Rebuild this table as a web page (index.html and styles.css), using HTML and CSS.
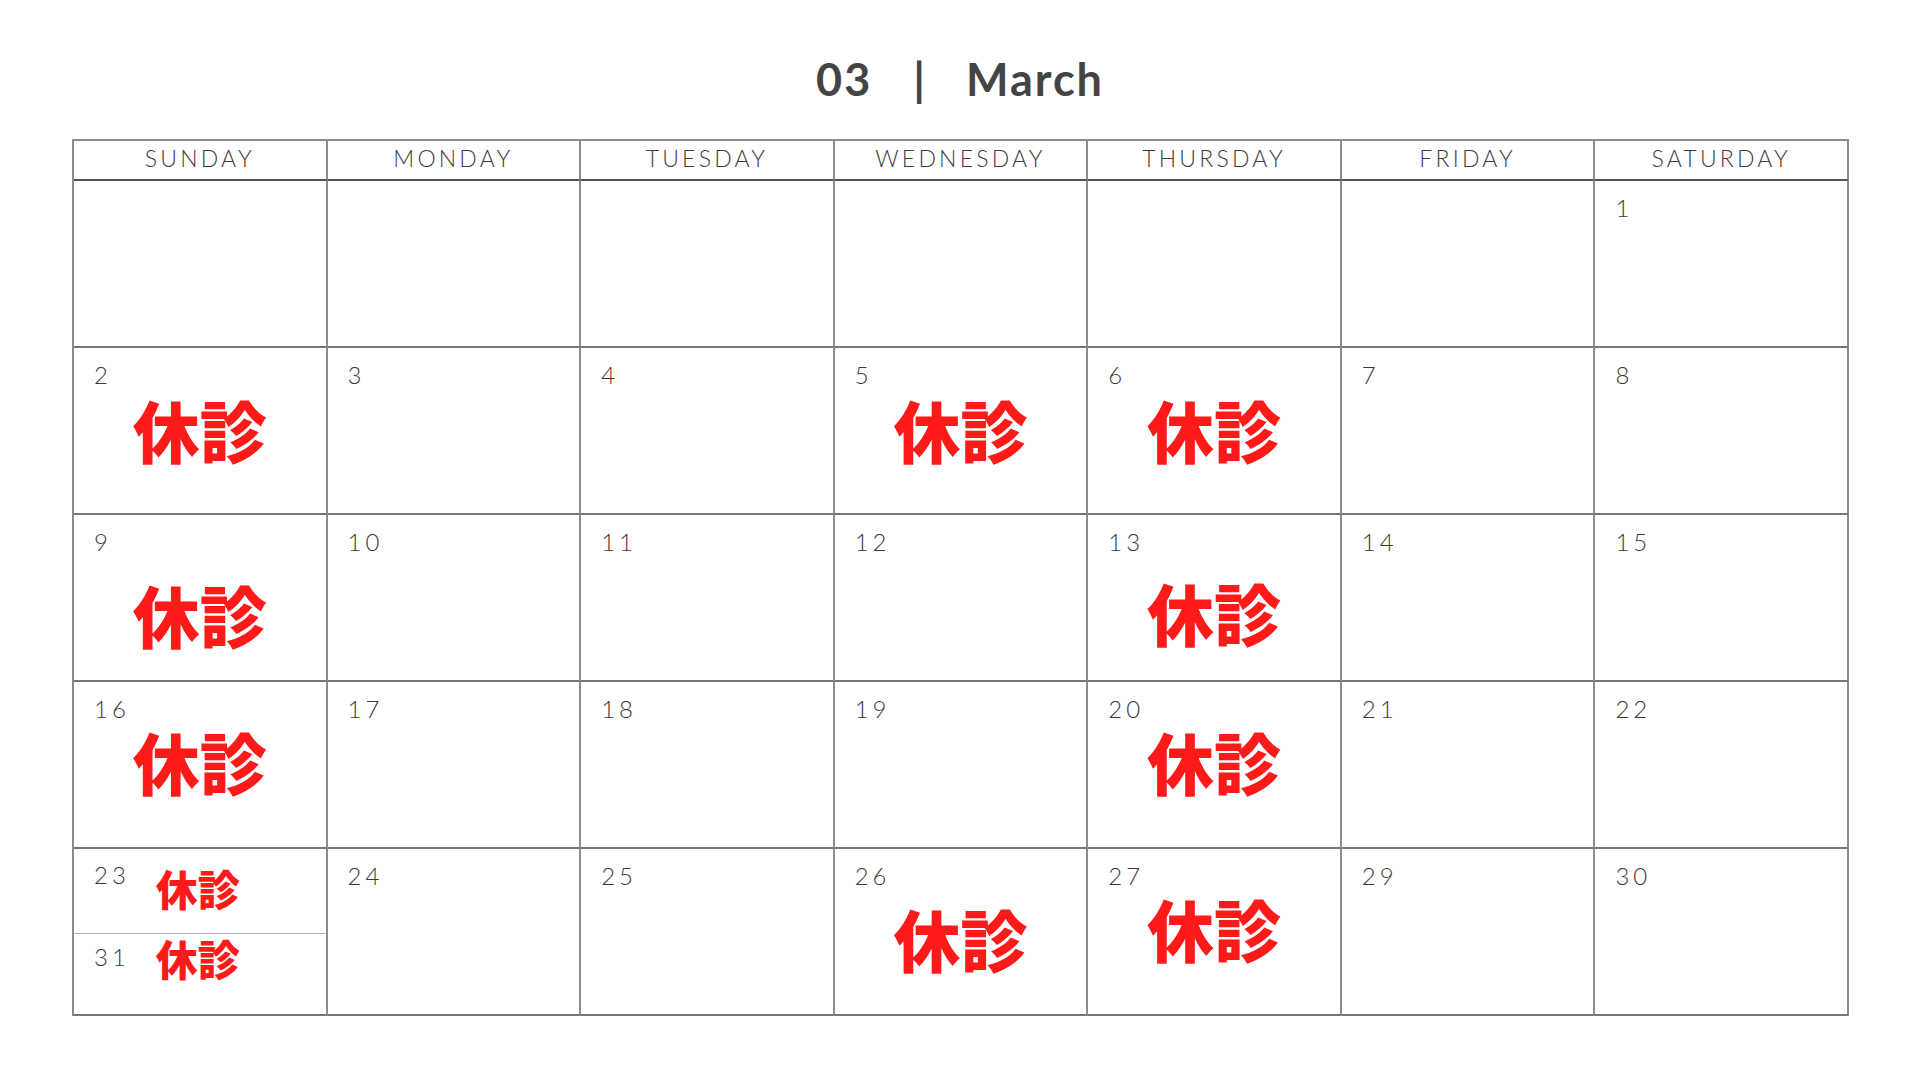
FILE: index.html
```html
<!DOCTYPE html>
<html lang="ja">
<head>
<meta charset="utf-8">
<title>03 | March</title>
<link rel="stylesheet" href="styles.css">
</head>
<body>
<div class="page">
  <h1 class="title"><span class="t-num">03</span><span class="t-bar">|</span><span class="t-month">March</span></h1>
  <div class="calendar">
    <div class="dow">SUNDAY</div>
    <div class="dow">MONDAY</div>
    <div class="dow">TUESDAY</div>
    <div class="dow">WEDNESDAY</div>
    <div class="dow">THURSDAY</div>
    <div class="dow">FRIDAY</div>
    <div class="dow">SATURDAY</div>

    <div class="day"></div>
    <div class="day"></div>
    <div class="day"></div>
    <div class="day"></div>
    <div class="day"></div>
    <div class="day"></div>
    <div class="day"><span class="num">1</span></div>

    <div class="day"><span class="num">2</span><span class="closed off-11">休診</span></div>
    <div class="day"><span class="num">3</span></div>
    <div class="day"><span class="num">4</span></div>
    <div class="day"><span class="num">5</span><span class="closed off-11">休診</span></div>
    <div class="day"><span class="num">6</span><span class="closed off-11">休診</span></div>
    <div class="day"><span class="num">7</span></div>
    <div class="day"><span class="num">8</span></div>

    <div class="day"><span class="num">9</span><span class="closed off-27">休診</span></div>
    <div class="day"><span class="num">10</span></div>
    <div class="day"><span class="num">11</span></div>
    <div class="day"><span class="num">12</span></div>
    <div class="day"><span class="num">13</span><span class="closed off-25">休診</span></div>
    <div class="day"><span class="num">14</span></div>
    <div class="day"><span class="num">15</span></div>

    <div class="day"><span class="num">16</span><span class="closed off-7">休診</span></div>
    <div class="day"><span class="num">17</span></div>
    <div class="day"><span class="num">18</span></div>
    <div class="day"><span class="num">19</span></div>
    <div class="day"><span class="num">20</span><span class="closed off-7">休診</span></div>
    <div class="day"><span class="num">21</span></div>
    <div class="day"><span class="num">22</span></div>

    <div class="day split">
      <div class="half half-top"><span class="num">23</span><span class="closed-sm sm-top">休診</span></div>
      <div class="half half-bottom"><span class="num">31</span><span class="closed-sm sm-bottom">休診</span></div>
    </div>
    <div class="day"><span class="num">24</span></div>
    <div class="day"><span class="num">25</span></div>
    <div class="day"><span class="num">26</span><span class="closed off-17">休診</span></div>
    <div class="day"><span class="num">27</span><span class="closed off-7">休診</span></div>
    <div class="day"><span class="num">29</span></div>
    <div class="day"><span class="num">30</span></div>
  </div>
</div>
</body>
</html>
```

FILE: styles.css
```css
* { box-sizing: border-box; }

html, body {
  margin: 0;
  padding: 0;
  background: #ffffff;
}

body {
  font-family: "Lato", "Liberation Sans", "Noto Sans CJK JP", sans-serif;
  color: #3d3d3d;
}

.page {
  width: 1920px;
  height: 1080px;
  padding-top: 56px;
}

.title {
  margin: 0;
  height: 46px;
  font-size: 45px;
  line-height: 46px;
  font-weight: 700;
  color: #444444;
  letter-spacing: 2px;
  display: flex;
  justify-content: center;
  align-items: baseline;
}

.t-bar {
  margin: 0 39px 0 41px;
  font-weight: 700;
}

.calendar {
  margin: 37px 0 0 72px;
  width: 1777px;
  display: grid;
  grid-template-columns: repeat(7, 1fr);
  grid-template-rows: 40px repeat(5, 167px);
  border-left: 2px solid #8c8c8c;
  border-top: 2px solid #8c8c8c;
}

.dow {
  border-right: 2px solid #8c8c8c;
  border-bottom: 2px solid #555555;
  font-size: 23px;
  font-weight: 300;
  letter-spacing: 3.2px;
  text-align: center;
  line-height: 34px;
  color: #3d3d3d;
}

.day {
  border-right: 2px solid #8c8c8c;
  border-bottom: 2px solid #777777;
  padding: 15px 0 0 20px;
  display: flex;
  flex-direction: column;
  align-items: flex-start;
}

.num {
  display: block;
  font-size: 24px;
  line-height: 24px;
  font-weight: 300;
  letter-spacing: 4px;
  color: #3a3a3a;
}

.closed {
  align-self: center;
  margin-left: -20px;
  display: block;
  font-family: "Noto Sans CJK JP", sans-serif;
  font-weight: 900;
  font-size: 67px;
  line-height: 70px;
  color: #ff1a1a;
  letter-spacing: 0;
}

.off-7 { margin-top: 5px; }
.off-11 { margin-top: 7px; }
.off-17 { margin-top: 15px; }
.off-25 { margin-top: 23px; }
.off-27 { margin-top: 25px; }

.split {
  padding: 0;
  display: flex;
  flex-direction: column;
  align-items: stretch;
}

.half {
  flex: 1;
  display: flex;
  align-items: flex-start;
  padding-left: 20px;
}

.half-top {
  border-bottom: 1px solid #b0b0b0;
  padding-top: 14px;
}

.half-bottom {
  padding-top: 11px;
}

.closed-sm {
  margin-left: 26px;
  font-family: "Noto Sans CJK JP", sans-serif;
  font-weight: 900;
  font-size: 42px;
  line-height: 43px;
  color: #ff1a1a;
}

.sm-top { margin-top: 3px; }
.sm-bottom { margin-top: -9px; }
```
